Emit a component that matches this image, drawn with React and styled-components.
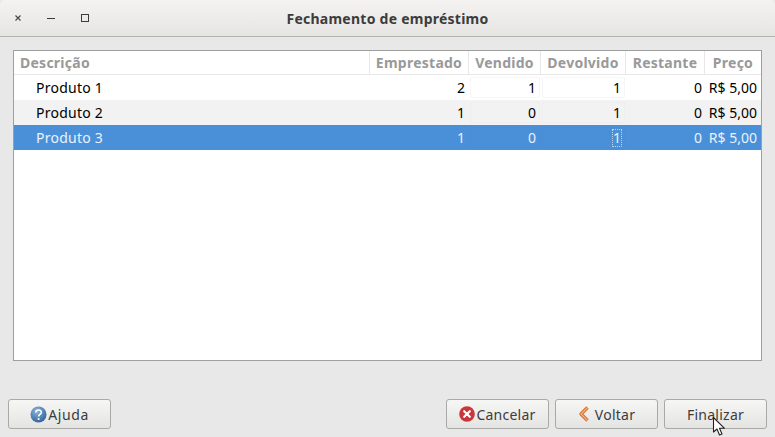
import React from "react";
import styled, {createGlobalStyle} from "styled-components";

const GlobalStyle = createGlobalStyle`
    html, body {
        margin: 0;
        padding: 0;
        background: #e8e8e8;
    }
    * {
        box-sizing: border-box;
    }
`;

const columns = "356px 99px 72px 85px 79px 1fr";

const Window = styled.div`
    width: 775px;
    height: 437px;
    display: flex;
    flex-direction: column;
    background: #e8e8e8;
    font-family: "Noto Sans", "Open Sans", sans-serif;
    font-size: 14px;
    letter-spacing: 0.25px;
    color: #000;
    overflow: hidden;
    position: relative;
`;

const TitleBar = styled.header`
    height: 37px;
    flex: none;
    display: grid;
    grid-template-columns: 100px 1fr 100px;
    align-items: center;
    background: linear-gradient(#f4f3f2, #e6e5e4);
    border-bottom: 1px solid #b3b3b1;
    border-radius: 5px 5px 0 0;
`;

const WindowControls = styled.div`
    display: flex;
    align-items: center;
    padding-left: 13px;
    gap: 24px;
`;

const Title = styled.h1`
    margin: 0;
    text-align: center;
    font-size: 14px;
    font-weight: 700;
    color: #3c3c3c;
`;

const Content = styled.main`
    flex: 1;
    display: flex;
    flex-direction: column;
    padding: 13px 8px 8px 8px;
`;

const Table = styled.section`
    height: 311px;
    margin: 0 5px;
    background: #fff;
    border: 1px solid #9f9f9f;
`;

const HeaderRow = styled.div`
    display: grid;
    grid-template-columns: ${columns};
    height: 24px;
    border-bottom: 1px solid #e8e8e8;
`;

const HeaderCell = styled.div`
    display: flex;
    align-items: center;
    justify-content: ${p => (p.$left ? "flex-start" : "center")};
    padding-left: ${p => (p.$left ? "6px" : "0")};
    font-size: 14px;
    font-weight: 700;
    color: #999;
    border-right: ${p => (p.$last ? "none" : "1px solid #e8e8e8")};
`;

const Row = styled.div`
    display: grid;
    grid-template-columns: ${columns};
    height: 25px;
    background: ${p => (p.$selected ? "#4a90d9" : p.$odd ? "#f2f2f2" : "#fff")};
    color: ${p => (p.$selected ? "#eaf2fb" : "#000")};
`;

const NameCell = styled.div`
    display: flex;
    align-items: center;
    padding-left: 22px;
`;

const NumCell = styled.div`
    display: flex;
    align-items: center;
    justify-content: flex-end;
    padding-right: ${p => p.$pad || 3}px;
    white-space: nowrap;
    letter-spacing: 0;
`;

const EditCell = styled(NumCell)`
    margin: 2px 1px;
    border: 1px solid ${p => (p.$selected ? "#4a8dd5" : p.$odd ? "#eeeeee" : "#f6f6f6")};
    border-radius: 2px;
    padding-right: 3px;
`;

const FocusMark = styled.span`
    outline: 1px dotted #b9d4f0;
    line-height: 16px;
`;

const Footer = styled.footer`
    margin-top: auto;
    display: flex;
    align-items: center;
    gap: 6px;
`;

const Spacer = styled.div`
    flex: 1;
`;

const Button = styled.button`
    width: 103px;
    height: 30px;
    padding: 0;
    display: flex;
    align-items: center;
    justify-content: center;
    gap: ${p => p.$gap || 1}px;
    font-family: inherit;
    font-size: 14px;
    letter-spacing: ${p => p.$spacing || 0.25}px;
    color: #3c3c3c;
    background: linear-gradient(#f6f6f5, #e4e4e3);
    border: 1px solid #a9a9a7;
    border-radius: 3px;
`;

const Cursor = styled.svg`
    position: absolute;
    left: 712px;
    top: 416px;
`;

const rows = [
    {name: "Produto 1", emprestado: 2, vendido: 1, devolvido: 1, restante: 0, preco: "R$ 5,00"},
    {name: "Produto 2", emprestado: 1, vendido: 0, devolvido: 1, restante: 0, preco: "R$ 5,00"},
    {name: "Produto 3", emprestado: 1, vendido: 0, devolvido: 1, restante: 0, preco: "R$ 5,00"},
];

const CloseIcon = () => (
    <svg width="10" height="10" viewBox="0 0 10 10">
        <path d="M2.5 2.5l5 5M7.5 2.5l-5 5" stroke="#4a4a4a" strokeWidth="1.2" />
    </svg>
);

const MinimizeIcon = () => (
    <svg width="10" height="10" viewBox="0 0 10 10" style={{marginLeft: -1}}>
        <path d="M1 5.5h8" stroke="#3c3c3c" strokeWidth="1" />
    </svg>
);

const MaximizeIcon = () => (
    <svg width="10" height="10" viewBox="0 0 10 10">
        <rect x="1.5" y="1.5" width="7" height="7" fill="none" stroke="#3c3c3c" strokeWidth="1" />
    </svg>
);

const HelpIcon = () => (
    <svg width="17" height="17" viewBox="0 0 17 17">
        <defs>
            <radialGradient id="helpFill" cx="40%" cy="30%" r="75%">
                <stop offset="0" stopColor="#8fb6dc" />
                <stop offset="1" stopColor="#2a6098" />
            </radialGradient>
        </defs>
        <circle cx="8.5" cy="8.5" r="8" fill="url(#helpFill)" />
        <path d="M5.8 6.5c0-3.2 5.6-3.2 5.6-.2 0 2.100-2.800 2.100-2.800 4.200" fill="none" stroke="#fff" strokeWidth="1.6" />
        <circle cx="8.6" cy="13" r="1.1" fill="#fff" />
    </svg>
);

const CancelIcon = () => (
    <svg width="16" height="16" viewBox="0 0 16 16">
        <circle cx="8" cy="8" r="7.8" fill="#c9363b" />
        <path d="M5.200 5.200l5.600 5.600M10.800 5.200l-5.600 5.600" stroke="#fff" strokeWidth="2.200" strokeLinecap="round" />
    </svg>
);

const BackIcon = () => (
    <svg width="12" height="16" viewBox="0 0 12 16">
        <path d="M9.500 1.500L3 8l6.500 6.500" fill="none" stroke="#d9702c" strokeWidth="3.400" strokeLinejoin="round" />
        <path d="M9.500 1.500L3 8l6.500 6.500" fill="none" stroke="#f5b27a" strokeWidth="1.200" strokeLinejoin="round" />
    </svg>
);

const App = () => {
    return (
        <Window>
            <GlobalStyle />
            <TitleBar>
                <WindowControls>
                    <CloseIcon />
                    <MinimizeIcon />
                    <MaximizeIcon />
                </WindowControls>
                <Title>Fechamento de empréstimo</Title>
            </TitleBar>
            <Content>
                <Table>
                    <HeaderRow>
                        <HeaderCell $left>Descrição</HeaderCell>
                        <HeaderCell>Emprestado</HeaderCell>
                        <HeaderCell>Vendido</HeaderCell>
                        <HeaderCell>Devolvido</HeaderCell>
                        <HeaderCell>Restante</HeaderCell>
                        <HeaderCell $last>Preço</HeaderCell>
                    </HeaderRow>
                    {rows.map((row, i) => {
                        const selected = i === 2;
                        const odd = i === 1;
                        return (
                            <Row key={row.name} $selected={selected} $odd={odd}>
                                <NameCell>{row.name}</NameCell>
                                <NumCell $pad={4}>{row.emprestado}</NumCell>
                                <EditCell $selected={selected} $odd={odd}>{row.vendido}</EditCell>
                                <EditCell $selected={selected} $odd={odd}>
                                    {selected ? <FocusMark>{row.devolvido}</FocusMark> : row.devolvido}
                                </EditCell>
                                <NumCell $pad={3}>{row.restante}</NumCell>
                                <NumCell $pad={4}>{row.preco}</NumCell>
                            </Row>
                        );
                    })}
                </Table>
                <Footer>
                    <Button $spacing={0.6}>
                        <HelpIcon />
                        Ajuda
                    </Button>
                    <Spacer />
                    <Button>
                        <CancelIcon />
                        Cancelar
                    </Button>
                    <Button $gap={5}>
                        <BackIcon />
                        Voltar
                    </Button>
                    <Button>Finalizar</Button>
                </Footer>
            </Content>
            <Cursor width="15" height="21" viewBox="0 0 15 21">
                <path d="M1.500 1.500v14.500l3.500-3 2.500 6 2.500-1-2.500-5.700h5z" fill="#fff" stroke="#222" strokeWidth="1.100" strokeLinejoin="round" />
            </Cursor>
        </Window>
    );
};

export default App;
